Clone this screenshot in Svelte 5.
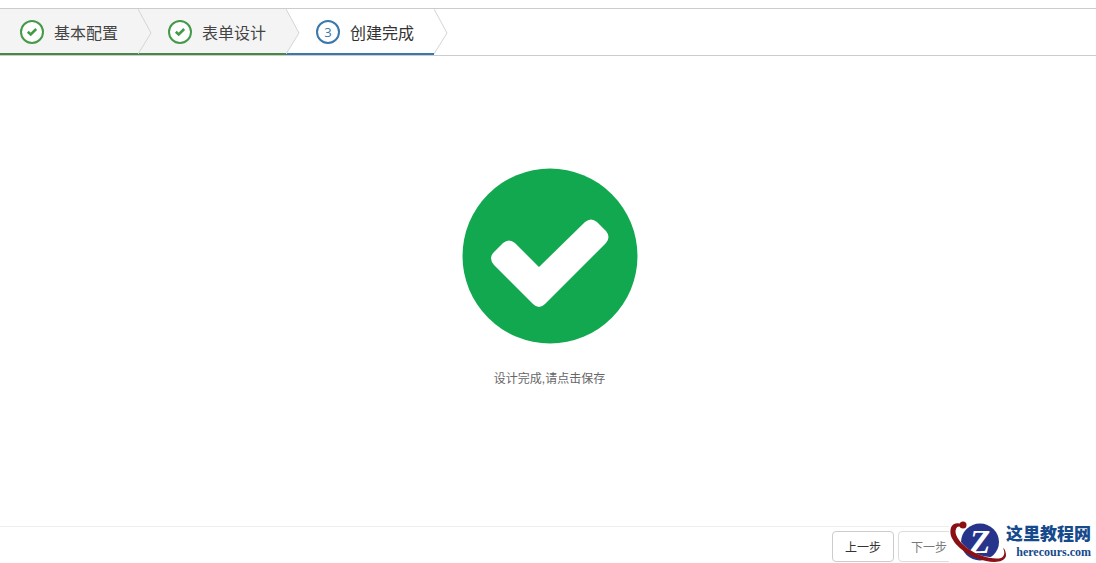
<script>
  let current = 3;

  const steps = [
    { id: 1, title: "基本配置" },
    { id: 2, title: "表单设计" },
    { id: 3, title: "创建完成" },
  ];

  const prev = () => {
    if (current > 1) current -= 1;
  };

  const next = () => {
    if (current < steps.length) current += 1;
  };
</script>

<div class="wizard">
  <ol class="steps">
    {#each steps as step (step.id)}
      <li class="step" class:complete={step.id < current} class:active={step.id === current}>
        <span class="badge">
          {#if step.id < current}
            <svg width="12" height="12" viewBox="0 0 12 12">
              <path d="M1.8 5.8 4.7 8.5 10.2 3" fill="none" stroke="currentColor" stroke-width="2.6" />
            </svg>
          {:else}
            {step.id}
          {/if}
        </span>
        <span class="title">{step.title}</span>
        <svg class="arrow" width="14" height="45" viewBox="0 0 14 45">
          <path class="arrow-fill" d="M0 0 13 24 0 45Z" />
          <path d="M0 0 13 24 0 45" fill="none" stroke="#d4d4d4" />
        </svg>
      </li>
    {/each}
  </ol>

  <main class="content">
    <svg class="done" width="176" height="176" viewBox="0 0 176 176">
      <circle cx="88" cy="88" r="87.5" fill="#12a850" />
      <path
        d="M32 84 41 75Q47 70 53 75L77 99 123 54Q129 49 135 54L144 63Q149 69 144 75L83 136Q77 142 71 136L32 97Q26 90 32 84Z"
        fill="#fff"
      />
    </svg>
    <p>设计完成,请点击保存</p>
  </main>

  <footer class="actions">
    <button type="button" on:click={prev} disabled={current === 1}>上一步</button>
    <button type="button" on:click={next} disabled={current === steps.length}>下一步</button>
  </footer>

  <div class="brand">
    <svg width="57" height="43" viewBox="0 0 57 43">
      <ellipse cx="31" cy="22" rx="19" ry="18.5" fill="#27348b" />
      <text class="brand-letter" x="31" y="33" text-anchor="middle">Z</text>
      <path d="M8 8C4 15 10 25 21 32 33 39 45 41 54 34" fill="none" stroke="#fff" stroke-width="3" />
      <path
        d="M13 4C3 1 0 8 2 16 6 27 22 38 37 41 47 43 55 42 57 36 57 32 56 29 54 28 56 32 56 36 52 38 44 40 29 36 18 28 9 21 5 13 7 9 8 6 10 6 13 7Z"
        fill="#8a1014"
      />
      <circle cx="14" cy="5" r="3.5" fill="#8a1014" />
    </svg>
    <div class="brand-text">
      <strong>这里教程网</strong>
      <span>herecours.com</span>
    </div>
  </div>
</div>

<style>
  :global(body) {
    margin: 0;
    background: #fff;
  }

  .wizard {
    position: relative;
    display: flex;
    flex-direction: column;
    min-height: 100vh;
    padding-top: 8px;
    box-sizing: border-box;
    font-family: "Liberation Sans", "Noto Sans CJK SC", sans-serif;
    font-size: 12px;
    color: #333;
  }

  .steps {
    display: flex;
    height: 46px;
    margin: 0;
    padding: 0;
    list-style: none;
    border-top: 1px solid #ccc;
    border-bottom: 1px solid #ccc;
  }

  .step {
    position: relative;
    display: flex;
    align-items: center;
    gap: 10px;
    box-sizing: border-box;
    height: 46px;
    padding: 2px 20px 0 30px;
    border-bottom: 2px solid transparent;
    font-size: 16px;
  }

  .step:first-child {
    padding-left: 20px;
  }

  .step.complete {
    background: #f4f4f4;
    border-color: #468847;
    color: #444;
  }

  .step.active {
    border-color: #3a78ab;
  }

  .badge {
    display: flex;
    align-items: center;
    justify-content: center;
    width: 20px;
    height: 20px;
    border: 2px solid #3a78ab;
    border-radius: 50%;
    background: #fff;
    color: #3a78ab;
    font-family: "Open Sans", sans-serif;
    font-size: 13px;
  }

  .complete .badge {
    border-color: #459a49;
    color: #459a49;
  }

  /* the arrow hangs over the start of the next step */
  .arrow {
    position: absolute;
    z-index: 1;
    top: 0;
    left: 100%;
  }

  .arrow-fill {
    fill: #fff;
  }

  .complete .arrow-fill {
    fill: #f4f4f4;
  }

  .content {
    flex: 1;
    display: flex;
    flex-direction: column;
    align-items: center;
    padding: 112px 0 32px 3px;
  }

  .done {
    display: block;
  }

  .content p {
    margin: 25px 0 0;
    line-height: 20px;
    color: #666;
  }

  .actions {
    display: flex;
    justify-content: flex-end;
    gap: 4px;
    padding: 4px 136px 1px 0;
    border-top: 1px solid #eee;
  }

  .actions button {
    width: 62px;
    height: 31px;
    padding: 0;
    border: 1px solid #ccc;
    border-radius: 4px;
    background: #fff;
    color: #333;
    font-family: inherit;
    font-size: 12px;
    cursor: pointer;
  }

  .actions button:disabled {
    opacity: 0.65;
    cursor: default;
  }

  /* site mark laid over the corner of the page */
  .brand {
    position: absolute;
    right: 0;
    bottom: 0;
    display: flex;
    align-items: center;
    padding-right: 5px;
    background: #fff;
  }

  .brand svg {
    display: block;
  }

  .brand-letter {
    fill: #fff;
    font-family: "Liberation Serif", serif;
    font-size: 34px;
    font-style: italic;
    font-weight: bold;
  }

  .brand-text {
    display: flex;
    flex-direction: column;
    align-items: flex-end;
    color: #164a8c;
    font-family: "Liberation Serif", "Noto Sans CJK SC", serif;
    font-weight: bold;
  }

  .brand-text strong {
    font-size: 17px;
    line-height: 20px;
  }

  .brand-text span {
    font-size: 12px;
    line-height: 14px;
  }
</style>
